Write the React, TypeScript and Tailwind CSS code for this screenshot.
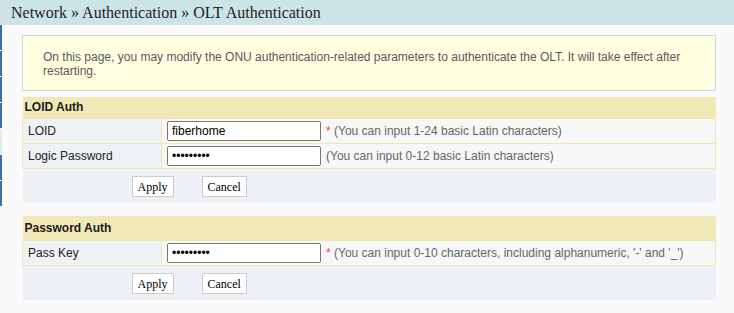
import React from 'react';

const sans = "font-['Liberation_Sans',Arial,sans-serif]";
const serif = "font-['Liberation_Serif','Times_New_Roman',serif]";

// left menu edge of the neighbouring frame
const stripSegments = ['#3b6ea8', '#3b6ea8', '#3b6ea8', '#3b6ea8', '#dcecef', '#3b6ea8', '#3b6ea8'];

type Field = {
  label: string;
  value: string;
  password?: boolean;
  required?: boolean;
  hint: string;
};

function AuthSection({ title, fields, headerClass }: { title: string; fields: Field[]; headerClass: string }) {
  return (
    <table className="w-[694px] border-collapse text-[12px]">
      <tbody>
        <tr>
          <td colSpan={2} className={`bg-[#f0e9b6] pl-[2px] font-bold text-[#1a1a1a] ${headerClass}`}>
            {title}
          </td>
        </tr>
        {fields.map((f) => (
          <tr key={f.label} className="h-[25px]">
            <td className="w-[139px] border border-[#f1e6b0] bg-[#eef1f5] pl-[5px] text-[#222]">{f.label}</td>
            <td className="border border-[#f1e6b0] bg-[#f7f7f7] pl-[5px]">
              <div className="flex items-center">
                <input
                  type={f.password ? 'password' : 'text'}
                  defaultValue={f.value}
                  className="h-[20px] w-[154px] rounded-[2px] border border-[#767676] bg-white px-[4px] text-[12px] text-black outline-none"
                />
                <span className="ml-[5px] text-[#666]">
                  {f.required && <span className="text-[#ff3333]">* </span>}
                  {f.hint}
                </span>
              </div>
            </td>
          </tr>
        ))}
        <tr>
          <td colSpan={2} className="h-[35px] bg-[#edf0f4] pl-[109px] pt-[2px]">
            <div className={`flex gap-[28px] ${serif}`}>
              <button className="h-[21px] border border-[#cccccc] bg-white px-[5px] text-[12px] leading-[14px] text-black">
                Apply
              </button>
              <button className="h-[21px] border border-[#cccccc] bg-white px-[5px] text-[12px] leading-[14px] text-black">
                Cancel
              </button>
            </div>
          </td>
        </tr>
      </tbody>
    </table>
  );
}

export default function App() {
  return (
    <div className={`flex h-[313px] w-[734px] flex-col overflow-hidden bg-[#fafafa] ${sans}`}>
      <div className={`flex h-[25px] items-center bg-[#cde4e6] pl-[11px] text-[16px] text-[#1e1e1e] ${serif}`}>
        Network » Authentication » OLT Authentication
      </div>

      <div className="flex flex-1">
        <div className="flex w-[2px] flex-col gap-[1px]">
          {stripSegments.map((c, i) => (
            <div key={i} className="h-[25px]" style={{ backgroundColor: c }} />
          ))}
        </div>

        <div className="flex flex-col pl-[20px] pt-[10px]">
          <div className="w-[694px] border border-[#c9d8e2] bg-[#ffffe0] pb-[12px] pl-[20px] pr-[16px] pt-[14px] text-[12px] leading-[14px] text-[#555a60]">
            On this page, you may modify the ONU authentication-related parameters to authenticate the OLT. It will take effect after restarting.
          </div>

          <div className="mt-[6px]">
            <AuthSection
              title="LOID Auth"
              headerClass="h-[21px]"
              fields={[
                { label: 'LOID', value: 'fiberhome', required: true, hint: '(You can input 1-24 basic Latin characters)' },
                { label: 'Logic Password', value: '123456789', password: true, hint: '(You can input 0-12 basic Latin characters)' },
              ]}
            />
          </div>

          <div className="mt-[13px]">
            <AuthSection
              title="Password Auth"
              headerClass="h-[24px]"
              fields={[
                {
                  label: 'Pass Key',
                  value: '123456789',
                  password: true,
                  required: true,
                  hint: "(You can input 0-10 characters, including alphanumeric, '-' and '_')",
                },
              ]}
            />
          </div>
        </div>
      </div>
    </div>
  );
}
